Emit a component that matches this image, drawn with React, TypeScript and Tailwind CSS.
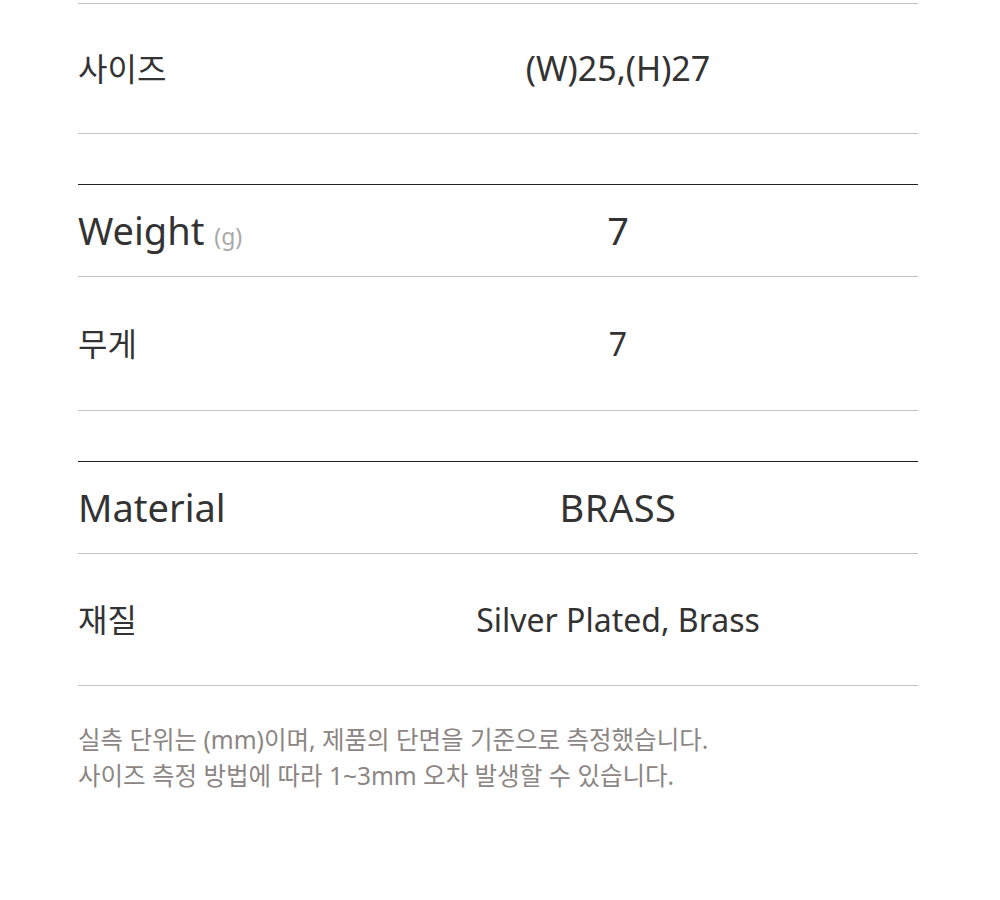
const FONT = "font-['Noto_Sans','Noto_Sans_CJK_KR',sans-serif]";

function Row({ label, value, className, valueClass = '' }: { label: React.ReactNode; value: string; className: string; valueClass?: string }) {
  return (
    <div className={`flex items-center ${className}`}>
      <div className="w-[240px] shrink-0">{label}</div>
      <div className={`flex-1 text-center ${valueClass}`}>{value}</div>
    </div>
  );
}

export default function App() {
  return (
    <div className={`w-[1000px] h-[900px] bg-white pt-[3px] pl-[78px] pr-[82px] text-[#333] ${FONT}`}>
      {/* size */}
      <Row
        className="h-[131px] border-y border-[#c4c4c4] text-[32px]"
        label="사이즈"
        value="(W)25,(H)27"
        valueClass="text-[34px]"
      />

      {/* weight */}
      <div className="mt-[50px]">
        <Row
          className="h-[93px] border-t border-t-[#222] border-b border-b-[#c4c4c4] text-[38px]"
          label={
            <span>
              Weight <span className="text-[23px] text-[#aaa]">(g)</span>
            </span>
          }
          value="7"
        />
        <Row className="h-[134px] border-b border-[#c4c4c4] text-[32px]" label="무게" value="7" />
      </div>

      {/* material */}
      <div className="mt-[50px]">
        <Row
          className="h-[93px] border-t border-t-[#222] border-b border-b-[#c4c4c4] text-[38px]"
          label="Material"
          value="BRASS"
          valueClass="tracking-[0.5px]"
        />
        <Row
          className="h-[132px] border-b border-[#c4c4c4] text-[32px]"
          label="재질"
          value="Silver Plated, Brass"
        />
      </div>

      <div className="mt-[36px] text-[24.5px] leading-[36px] text-[#8c8684]">
        <p>실측 단위는 (mm)이며, 제품의 단면을 기준으로 측정했습니다.</p>
        <p>사이즈 측정 방법에 따라 1~3mm 오차 발생할 수 있습니다.</p>
      </div>
    </div>
  );
}
